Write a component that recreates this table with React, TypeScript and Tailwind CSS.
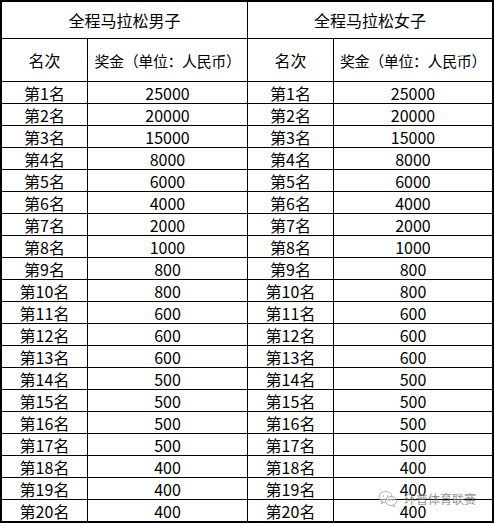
import React from "react";

const men = [25000, 20000, 15000, 8000, 6000, 4000, 2000, 1000, 800, 800, 600, 600, 600, 500, 500, 500, 500, 400, 400, 400];

const cell = "bg-white flex items-center justify-center leading-none";

export default function App() {
  return (
    <div
      className="relative w-[494px] h-[523px] bg-black pt-[2px] px-[2px] pb-[2px] text-black text-[16px]"
      style={{ fontFamily: '"Noto Sans CJK SC", "Noto Sans", sans-serif' }}
    >
      <div className="grid grid-cols-[85px_159px_85px_158px] grid-rows-[36px_42px_repeat(20,21px)] gap-[1px]">
        <div className={`${cell} col-span-2`}>全程马拉松男子</div>
        <div className={`${cell} col-span-2`}>全程马拉松女子</div>
        <div className={cell}>名次</div>
        <div className={`${cell} text-[15px] tracking-[-0.4px]`}>奖金（单位：人民币）</div>
        <div className={cell}>名次</div>
        <div className={`${cell} text-[15px] tracking-[-0.4px]`}>奖金（单位：人民币）</div>
        {men.map((v, i) => (
          <React.Fragment key={i}>
            <div className={cell}>第{i + 1}名</div>
            <div className={cell}>{v}</div>
            <div className={cell}>第{i + 1}名</div>
            <div className={cell}>{v}</div>
          </React.Fragment>
        ))}
      </div>
      <div className="absolute left-[378px] top-[490px] flex items-center gap-[6px] text-[12px] text-[#7a7a7a] opacity-80 pointer-events-none">
        <svg width="20" height="18" viewBox="0 0 20 18" fill="none" stroke="#a0a0a0" strokeWidth="1">
          <ellipse cx="7.5" cy="7" rx="6.5" ry="5.5" fill="rgba(255,255,255,0.6)" />
          <path d="M4 11.5 L3 14 L6 12.3" />
          <circle cx="5.2" cy="6" r="0.8" fill="#a0a0a0" stroke="none" />
          <circle cx="9.6" cy="6" r="0.8" fill="#a0a0a0" stroke="none" />
          <ellipse cx="13" cy="11" rx="5.5" ry="4.5" fill="rgba(255,255,255,0.6)" />
          <path d="M15.5 15 L17 17 L14 15.4" />
          <circle cx="11.3" cy="10.3" r="0.7" fill="#a0a0a0" stroke="none" />
          <circle cx="14.7" cy="10.3" r="0.7" fill="#a0a0a0" stroke="none" />
        </svg>
        <span>环普体育联赛</span>
      </div>
    </div>
  );
}
